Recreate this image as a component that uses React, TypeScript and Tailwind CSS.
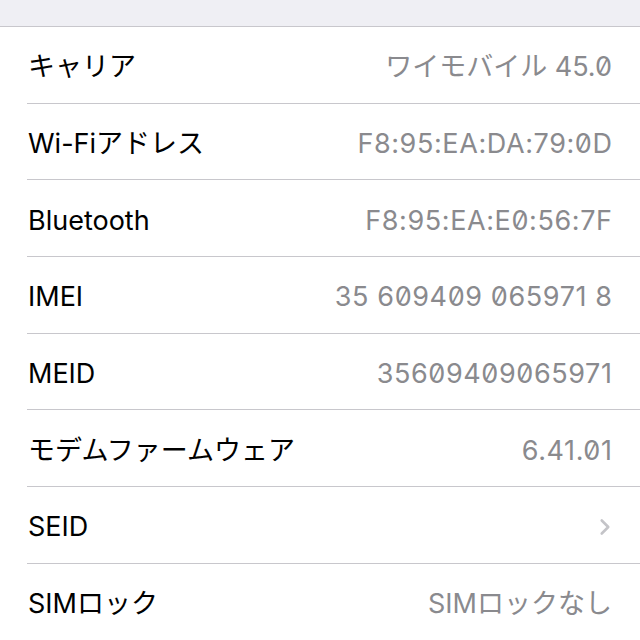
import { ChevronRight } from 'lucide-react';

type Row = {
  label: string;
  value?: string;
  numeric?: boolean;
  chevron?: boolean;
};

const rows: Row[] = [
  { label: 'キャリア', value: 'ワイモバイル 45.0' },
  { label: 'Wi-Fiアドレス', value: 'F8:95:EA:DA:79:0D', numeric: true },
  { label: 'Bluetooth', value: 'F8:95:EA:E0:56:7F', numeric: true },
  { label: 'IMEI', value: '35 609409 065971 8', numeric: true },
  { label: 'MEID', value: '35609409065971', numeric: true },
  { label: 'モデムファームウェア', value: '6.41.01', numeric: true },
  { label: 'SEID', chevron: true },
  { label: 'SIMロック', value: 'SIMロックなし' },
];

const App = () => {
  return (
    <div className="h-[640px] w-[640px] overflow-hidden bg-white font-['Inter','Noto_Sans_CJK_JP',sans-serif]">
      <div className="h-[27px] border-b border-[#c8c7cc] bg-[#efeff4]" />
      <ul>
        {rows.map((row) => (
          <li key={row.label} className="pl-[27px]">
            <div className="flex h-[76.7px] items-center justify-between border-b border-[#c8c7cc] pt-[4px] pr-[28px] pl-[1px]">
              <span className="text-[27px] leading-none text-black">
                {row.label}
              </span>
              {row.chevron ? (
                <ChevronRight
                  className="mr-[-6px] h-[26px] w-[26px] text-[#c4c4c8]"
                  strokeWidth={2.4}
                />
              ) : row.numeric ? (
                <span className="mr-[-0.6px] text-[27px] leading-none tracking-[0.6px] text-[#8a8a8e] [font-feature-settings:'zero']">
                  {row.value}
                </span>
              ) : (
                <span className="text-[27px] leading-none text-[#8a8a8e] [font-feature-settings:'zero']">
                  {row.value}
                </span>
              )}
            </div>
          </li>
        ))}
      </ul>
    </div>
  );
};

export default App;
